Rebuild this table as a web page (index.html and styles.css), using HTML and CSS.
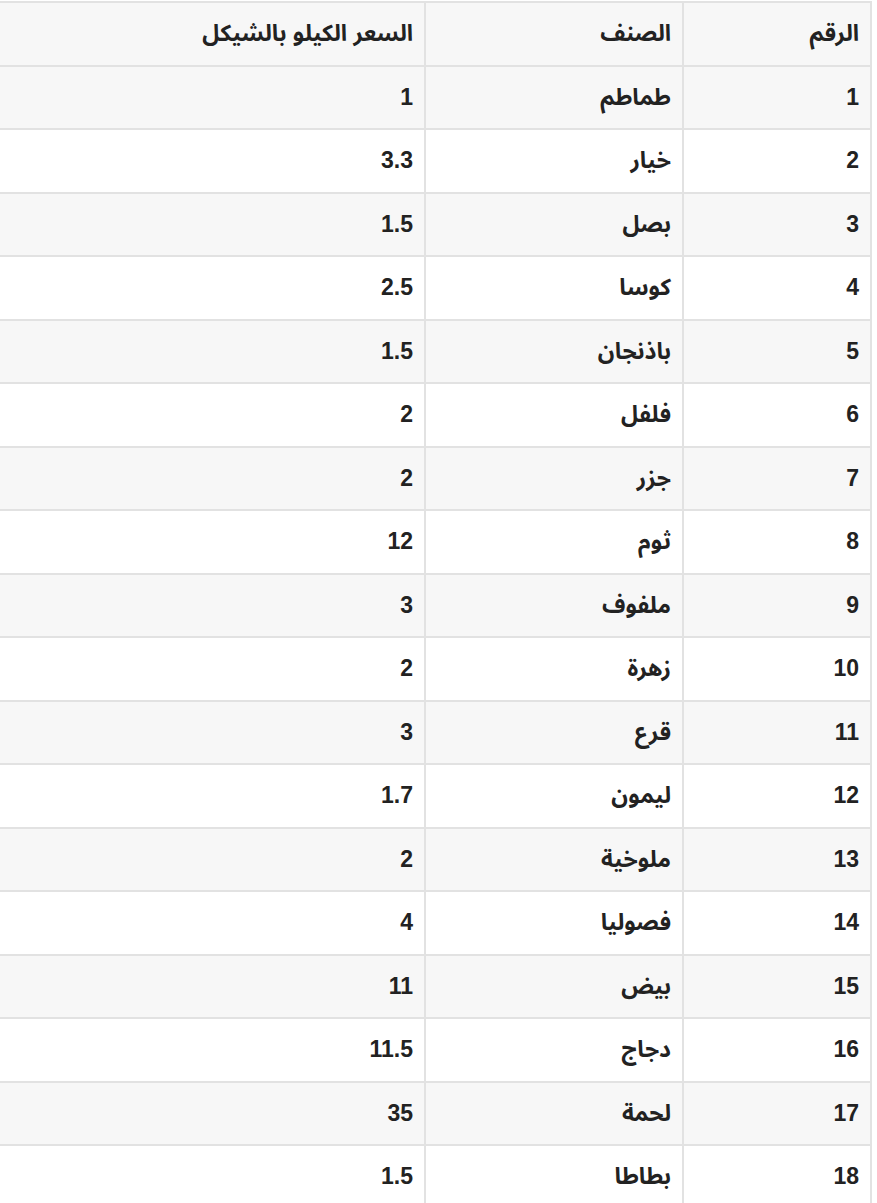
FILE: index.html
```html
<!DOCTYPE html>
<html lang="ar" dir="rtl">
<head>
<meta charset="utf-8">
<title>أسعار الخضار</title>
<link rel="stylesheet" href="styles.css">
</head>
<body>
<div class="wrap">
<table class="prices">
<colgroup><col class="c-num"><col class="c-name"><col class="c-price"></colgroup>
<thead>
<tr><th>الرقم</th><th>الصنف</th><th>السعر الكيلو بالشيكل</th></tr>
</thead>
<tbody>
<tr><td>1</td><td>طماطم</td><td>1</td></tr>
<tr><td>2</td><td>خيار</td><td>3.3</td></tr>
<tr><td>3</td><td>بصل</td><td>1.5</td></tr>
<tr><td>4</td><td>كوسا</td><td>2.5</td></tr>
<tr><td>5</td><td>باذنجان</td><td>1.5</td></tr>
<tr><td>6</td><td>فلفل</td><td>2</td></tr>
<tr><td>7</td><td>جزر</td><td>2</td></tr>
<tr><td>8</td><td>ثوم</td><td>12</td></tr>
<tr><td>9</td><td>ملفوف</td><td>3</td></tr>
<tr><td>10</td><td>زهرة</td><td>2</td></tr>
<tr><td>11</td><td>قرع</td><td>3</td></tr>
<tr><td>12</td><td>ليمون</td><td>1.7</td></tr>
<tr><td>13</td><td>ملوخية</td><td>2</td></tr>
<tr><td>14</td><td>فصوليا</td><td>4</td></tr>
<tr><td>15</td><td>بيض</td><td>11</td></tr>
<tr><td>16</td><td>دجاج</td><td>11.5</td></tr>
<tr><td>17</td><td>لحمة</td><td>35</td></tr>
<tr><td>18</td><td>بطاطا</td><td>1.5</td></tr>
</tbody>
</table>
</div>
</body>
</html>
```

FILE: styles.css
```css
html, body {
  margin: 0;
  padding: 0;
  background: #ffffff;
}

.wrap {
  overflow: hidden;
  padding: 1px 5px 0 0;
}

.prices {
  border-collapse: collapse;
  width: 910px;
  table-layout: fixed;
  font-family: "Liberation Sans", "Noto Sans Arabic", "Noto Sans", "DejaVu Sans", sans-serif;
  font-size: 23px;
  font-weight: bold;
  color: #222222;
}

.c-num { width: 188px; }
.c-name { width: 258px; }
.c-price { width: auto; }

.prices th,
.prices td {
  border: 2px solid #e2e2e2;
  padding: 0 11px;
  height: 61.5px;
  text-align: right;
  vertical-align: middle;
  line-height: 1;
}

.prices thead tr,
.prices tbody tr:nth-child(odd) {
  background: #f7f7f7;
}

.prices tbody tr:nth-child(even) {
  background: #ffffff;
}
```
